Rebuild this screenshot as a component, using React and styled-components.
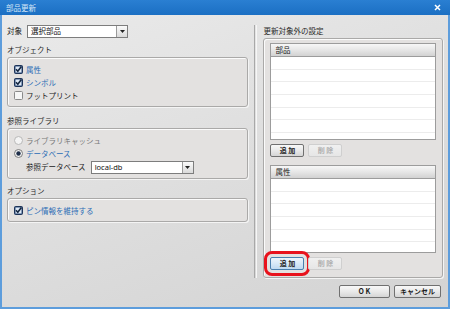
import styled, { createGlobalStyle } from 'styled-components';

const GlobalStyle = createGlobalStyle`
  body {
    margin: 0;
    font-family: "Noto Sans CJK JP", "Noto Sans", sans-serif;
  }
`;

const CheckIcon = () => (
  <svg width="9" height="9" viewBox="0 0 9 9">
    <rect x="0.5" y="0.5" width="8" height="8" rx="1" fill="#2c4c7c" stroke="#1d3357" />
    <rect x="1.5" y="1.5" width="6" height="6" fill="#dfe9f5" />
    <path d="M2 4.3 L3.8 6.2 L7.4 1.6" fill="none" stroke="#142640" strokeWidth="1.6" />
  </svg>
);

const BoxIcon = () => (
  <svg width="9" height="9" viewBox="0 0 9 9">
    <rect x="0.5" y="0.5" width="8" height="8" rx="1" fill="#f6f6f6" stroke="#8a8a8a" />
  </svg>
);

const RadioIcon = ({ checked, disabled }) => (
  <svg width="9" height="9" viewBox="0 0 9 9">
    <circle cx="4.5" cy="4.5" r="4" fill="#f4f4f4" stroke={disabled ? '#b8b8b8' : '#7c7c7c'} />
    {checked && <circle cx="4.5" cy="4.5" r="2.2" fill="#1f2f4a" />}
  </svg>
);

const Select = ({ value, width }) => (
  <SelectBox $width={width}>
    <SelectValue>{value}</SelectValue>
    <SelectArrow>
      <svg width="5" height="3" viewBox="0 0 5 3">
        <path d="M0 0 H5 L2.5 3 Z" fill="#222" />
      </svg>
    </SelectArrow>
  </SelectBox>
);

const Table = ({ title, height, rows }) => (
  <TableBox $height={height}>
    <TableHeader>{title}</TableHeader>
    <TableBody>
      {Array.from({ length: rows }).map((_, i) => (
        <TableRow key={i} />
      ))}
    </TableBody>
  </TableBox>
);

const App = () => (
  <>
    <GlobalStyle />
    <Window>
      <TitleBar>
        <Title>部品更新</Title>
        <svg width="7" height="7" viewBox="0 0 7 7">
          <path d="M1 1 L6 6 M6 1 L1 6" stroke="#fff" strokeWidth="1.5" />
        </svg>
      </TitleBar>
      <Body>
        <Columns>
          <LeftCol>
            <TargetRow>
              <Text>対象</Text>
              <Select value="選択部品" width={101} />
            </TargetRow>

            <SectionLabel>オブジェクト</SectionLabel>
            <Group>
              <OptionRow>
                <CheckIcon />
                <OptionText $active>属性</OptionText>
              </OptionRow>
              <OptionRow>
                <CheckIcon />
                <OptionText $active>シンボル</OptionText>
              </OptionRow>
              <OptionRow>
                <BoxIcon />
                <OptionText>フットプリント</OptionText>
              </OptionRow>
            </Group>

            <SectionLabel $gap={9}>参照ライブラリ</SectionLabel>
            <Group>
              <OptionRow>
                <RadioIcon disabled />
                <OptionText $muted>ライブラリキャッシュ</OptionText>
              </OptionRow>
              <OptionRow>
                <RadioIcon checked />
                <OptionText $active>データベース</OptionText>
              </OptionRow>
              <DbRow>
                <Text>参照データベース</Text>
                <Select value="local-db" width={103} />
              </DbRow>
            </Group>

            <SectionLabel>オプション</SectionLabel>
            <Group>
              <OptionRow>
                <CheckIcon />
                <OptionText $active>ピン情報を維持する</OptionText>
              </OptionRow>
            </Group>
          </LeftCol>

          <Separator />

          <RightCol>
            <RightLabel>更新対象外の設定</RightLabel>
            <RightGroup>
              <Table title="部品" height={97} rows={7} />
              <ButtonRow $top={4}>
                <SmallButton>追 加</SmallButton>
                <SmallButton disabled>削 除</SmallButton>
              </ButtonRow>
              <Table title="属性" height={88} rows={6} />
              <ButtonRow $top={6}>
                <SmallButton $focused>追 加</SmallButton>
                <SmallButton disabled>削 除</SmallButton>
              </ButtonRow>
            </RightGroup>
          </RightCol>
        </Columns>

        <Footer>
          <DialogButton $width={51}>O K</DialogButton>
          <DialogButton $width={47}>キャンセル</DialogButton>
        </Footer>
      </Body>
    </Window>
  </>
);

const Window = styled.div`
  width: 450px;
  height: 309px;
  display: flex;
  flex-direction: column;
  box-sizing: border-box;
  overflow: hidden;
`;

const TitleBar = styled.div`
  height: 15px;
  flex: none;
  display: flex;
  align-items: center;
  justify-content: space-between;
  padding: 0 9px 0 6px;
  background: linear-gradient(180deg, #2a7fd2 0%, #1b6fc3 100%);
`;

const Title = styled.span`
  font-size: 7.5px;
  color: #d8e8f8;
  line-height: 1;
`;

const Body = styled.div`
  flex: 1;
  display: flex;
  flex-direction: column;
  border: 2px solid #5d9ddc;
  border-top: none;
  background: linear-gradient(160deg, #eaeaea 0%, #dedede 50%, #d3d3d3 100%);
`;

const Columns = styled.div`
  display: flex;
  padding: 9px 5px 0 5px;
  height: 263px;
  box-sizing: border-box;
`;

const LeftCol = styled.div`
  width: 242px;
  display: flex;
  flex-direction: column;
`;

const Separator = styled.div`
  width: 1px;
  margin: 1px 6px 0 6px;
  border-left: 1px solid #a8a8a8;
  border-right: 1px solid #f6f6f6;
`;

const RightCol = styled.div`
  width: 180px;
  display: flex;
  flex-direction: column;
`;

const Text = styled.span`
  font-size: 7.5px;
  color: #222;
  line-height: 1;
  white-space: nowrap;
`;

const TargetRow = styled.div`
  height: 14px;
  display: flex;
  align-items: center;
  gap: 5px;
`;

const SectionLabel = styled.div`
  height: 10px;
  margin: ${(p) => p.$gap || 7}px 0 2px 0;
  font-size: 7.5px;
  line-height: 10px;
  color: #2a2a2a;
`;

const Group = styled.div`
  border: 1px solid #aaa9a8;
  border-radius: 3px;
  box-shadow: inset 1px 1px 0 #fbfbfb, 1px 1px 0 #f4f4f4;
  background: #e3e1e0;
  padding: 5px 6px 4px 6px;
`;

const OptionRow = styled.div`
  height: 13px;
  display: flex;
  align-items: center;
  gap: 3px;
`;

const OptionText = styled.span`
  font-size: 7.5px;
  line-height: 1;
  color: ${(p) => (p.$active ? '#2a6cb5' : p.$muted ? '#7a7a7a' : '#222')};
`;

const DbRow = styled.div`
  height: 14px;
  display: flex;
  align-items: center;
  gap: 5px;
  padding-left: 12px;
`;

const SelectBox = styled.div`
  width: ${(p) => p.$width}px;
  height: 13px;
  box-sizing: border-box;
  border: 1px solid #7d7d7d;
  background: #fff;
  display: flex;
  align-items: stretch;
`;

const SelectValue = styled.div`
  flex: 1;
  font-size: 7.5px;
  line-height: 11px;
  padding-left: 3px;
  color: #111;
  font-family: "Noto Sans", "Noto Sans CJK JP", sans-serif;
`;

const SelectArrow = styled.div`
  width: 10px;
  border-left: 1px solid #9a9a9a;
  background: linear-gradient(180deg, #fafafa, #dadada);
  display: flex;
  align-items: center;
  justify-content: center;
`;

const RightLabel = styled.div`
  height: 10px;
  margin: 2px 0 2px 0;
  font-size: 7.5px;
  line-height: 10px;
  color: #2a2a2a;
`;

const RightGroup = styled.div`
  height: 240px;
  box-sizing: border-box;
  border: 1px solid #aaa9a8;
  border-radius: 3px;
  box-shadow: inset 1px 1px 0 #fbfbfb, 1px 1px 0 #f4f4f4;
  background: #e3e1e0;
  padding: 4px 6px 5px 6px;
  display: flex;
  flex-direction: column;
`;

const TableBox = styled.div`
  height: ${(p) => p.$height}px;
  box-sizing: border-box;
  border: 1px solid #9c9c9c;
  background: #fff;
  display: flex;
  flex-direction: column;
  overflow: hidden;
  & + div {
    margin-top: 4px;
  }
`;

const TableHeader = styled.div`
  height: 13px;
  flex: none;
  box-sizing: border-box;
  border-bottom: 1px solid #9c9c9c;
  background: linear-gradient(180deg, #f7f7f7 0%, #e6e6e6 50%, #d2d2d2 100%);
  font-size: 7.5px;
  line-height: 12px;
  padding-left: 4px;
  color: #222;
`;

const TableBody = styled.div`
  flex: 1;
  overflow: hidden;
`;

const TableRow = styled.div`
  height: 12.7px;
  box-sizing: border-box;
  border-bottom: 1px solid #ececec;
`;

const ButtonRow = styled.div`
  display: flex;
  gap: 4px;
  margin-top: ${(p) => p.$top}px;
  margin-bottom: ${(p) => (p.$top === 4 ? 8 : 0)}px;
`;

const SmallButton = styled.div`
  width: 34px;
  height: 13px;
  box-sizing: border-box;
  border-radius: 2px;
  border: 1px solid ${(p) => (p.disabled ? '#cfcfcf' : p.$focused ? '#4a7fae' : '#707070')};
  background: ${(p) =>
    p.disabled
      ? 'linear-gradient(180deg, #f0f0f0, #e6e6e6)'
      : p.$focused
        ? 'linear-gradient(180deg, #edf5fc 0%, #d7e9f8 50%, #bfdaf1 100%)'
        : 'linear-gradient(180deg, #f8f8f8 0%, #e9e9e9 50%, #d5d5d5 100%)'};
  color: ${(p) => (p.disabled ? '#b0b0b0' : '#1e1e1e')};
  font-size: 7px;
  line-height: 11px;
  text-align: center;
  font-weight: 700;
  outline: ${(p) => (p.$focused ? '3px solid #e8121c' : 'none')};
  outline-offset: 3px;
`;

const Footer = styled.div`
  display: flex;
  justify-content: flex-end;
  gap: 4px;
  padding: 7px 7px 0 0;
`;

const DialogButton = styled.div`
  width: ${(p) => p.$width}px;
  height: 13px;
  box-sizing: border-box;
  border-radius: 2px;
  border: 1px solid #707070;
  background: linear-gradient(180deg, #f8f8f8 0%, #e9e9e9 50%, #d5d5d5 100%);
  font-size: 7px;
  line-height: 11px;
  text-align: center;
  font-weight: 700;
  color: #1e1e1e;
`;

export default App;
